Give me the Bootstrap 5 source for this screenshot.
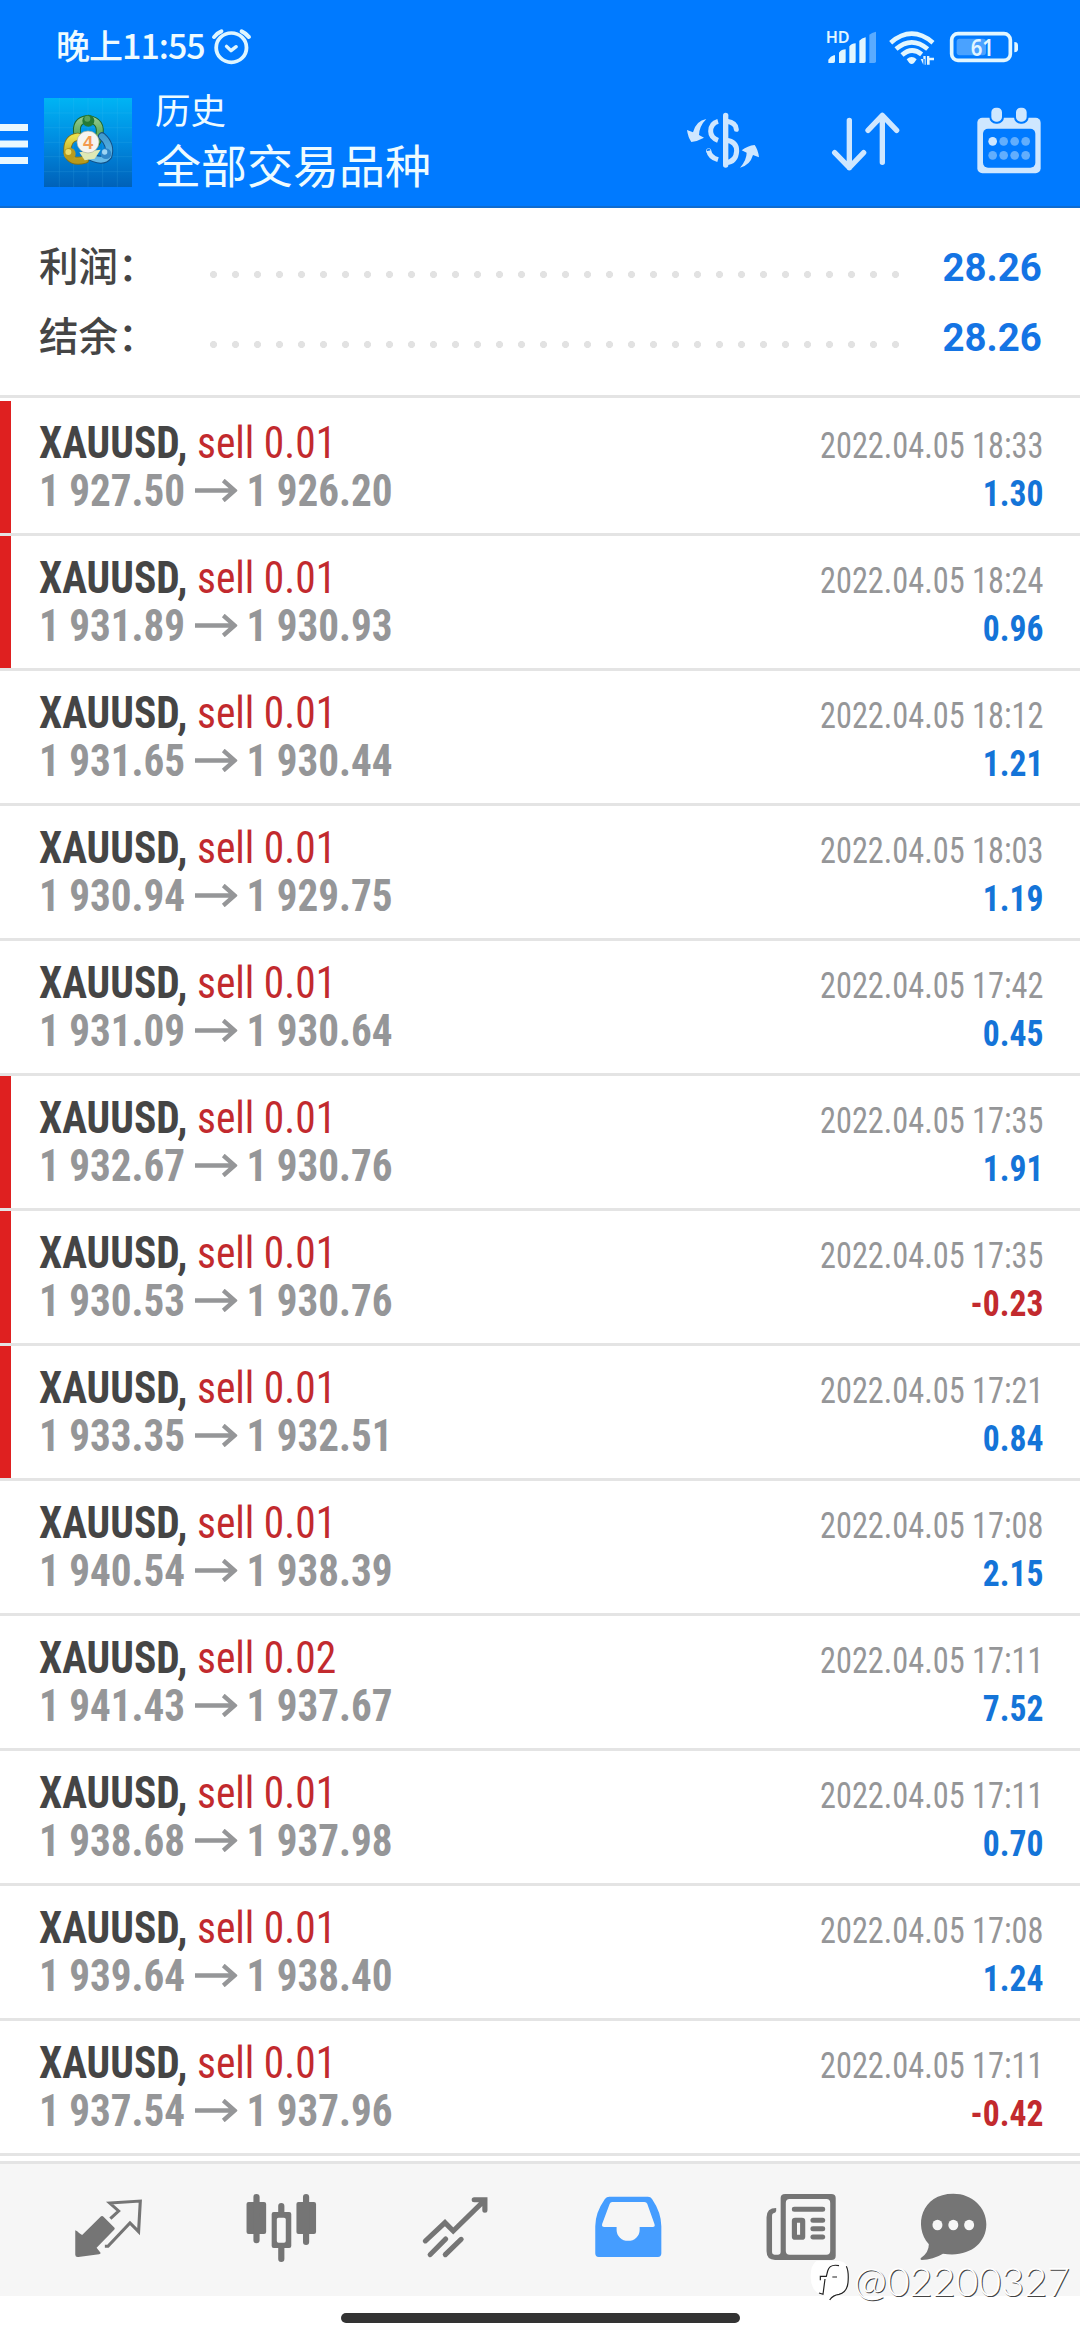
<!DOCTYPE html>
<html lang="zh-CN">
<head>
<meta charset="utf-8">
<meta name="viewport" content="width=device-width, initial-scale=1">
<title>历史</title>
<link href="https://cdn.jsdelivr.net/npm/bootstrap@5.3.0/dist/css/bootstrap.min.css" rel="stylesheet">
<style>
body{width:1080px;height:2340px;overflow:hidden;background:#fff;font-family:Roboto,"Noto Sans CJK SC",sans-serif;color:#454545}
svg{display:block;flex:none}
.topzone{height:208px;background:#007aff;color:#eefbff;border-bottom:2px solid #0f6cd0}
.statusline{height:96px;padding:20px 59px 0 56px}
.clock{font:500 34px/50px "Noto Sans CJK SC",sans-serif;letter-spacing:-1px;white-space:nowrap}
.alarm{margin:7px 0 0 5px}
.appline{height:110px}
.burger{margin-top:28px}
.logo{margin:2px 0 0 16px}
.titles{margin:-7px 0 0 23px}
.ttl1{font:400 35.5px/40px "Noto Sans CJK SC",sans-serif}
.ttl2{font:400 46px/56px "Noto Sans CJK SC",sans-serif;margin-top:6px}
.ic-cur{margin:4px 53px 0 auto}
.ic-sort{margin:14px 71px 0 0}
.ic-cal{margin:9px 36px 0 0}
.summary{height:190px;padding:24px 38px 0 40px;border-bottom:3px solid #e4e4e4}
.sumline{height:70px}
.sumline .lbl{width:171px;margin-left:-1px;font:500 39.5px/66px "Noto Sans CJK SC",sans-serif;margin-bottom:6px}
.dotrow{width:690px;height:7px;margin-top:15px;background:radial-gradient(circle at 3.5px 3.5px,#e2e2e2 3.3px,transparent 3.8px) 0 0/22px 7px}
.sumline .amt{font:700 39px/70px Roboto,sans-serif;color:#1474e4;margin-top:2px;transform:scaleX(.985);transform-origin:right}
.deals{padding-top:3px}
.deal{height:135px;border-bottom:3px solid #e4e4e4;padding:19px 37px 0 39px}
.deal.sl{box-shadow:inset 11px 0 #df2020}
.cnd{font-family:"Roboto Condensed",Roboto,sans-serif;font-stretch:75%;white-space:nowrap}
.pair,.prices{font-size:43.5px;line-height:48px;transform-origin:left}
.pair{font-weight:700;transform:scaleX(.953)}
.pair span{font-weight:400;color:#c22a2e}
.prices{font-weight:700;color:#959698;transform:scaleX(.945)}
.prices svg{margin:0 10px 3px 10px}
.when{font-size:36.5px;line-height:48px;color:#959698;margin-top:2px;transform:scaleX(.885);transform-origin:right}
.gain{font-size:36.5px;line-height:48px;font-weight:700;color:#1474d8;transform:scaleX(.92);transform-origin:right}
.gain.loss{color:#c22a2e}
.tabs{margin-top:5px;height:135px;border-top:3px solid #e4e4e4;background:#f6f6f6;padding:26px 0 0 22px}
.tabs a{width:173.2px;display:flex;justify-content:center}
.tabs a:last-child{width:130px}
.homebar{width:399px;height:10px;border-radius:5px;background:#333;margin:17px auto 0}
.wmark{right:10px;bottom:36px;height:46px;color:#fff;font:300 39.5px/46px Lato,sans-serif;text-shadow:1px 1px 0 #444;white-space:nowrap}
</style>
</head>
<body class="position-relative">
<header class="topzone">
 <div class="statusline d-flex align-items-start">
  <span class="clock">晚上11:55</span>
  <svg class="alarm" width="43.4" height="40" viewBox="610 80 126 120" preserveAspectRatio="none" fill="none" stroke="#dff6ff" stroke-linecap="round" stroke-linejoin="round"><circle cx="672" cy="142" r="44" stroke-width="11"/><path d="M658 138L671 151L686 139" stroke-width="10"/><path d="M622 110Q630 98 643 93M702 93Q715 99 723 110" stroke-width="12"/></svg>
  <svg class="ms-auto" width="200" height="55" viewBox="0 0 600 165" fill="#e2f6ff">
   <text x="14" y="68" font-family="Noto Sans" font-weight="600" font-size="46" textLength="72" lengthAdjust="spacingAndGlyphs">HD</text>
   <path d="M22 129V119Q28 108 40 105Q42 105 42 109V124Q42 129 37 129ZM54 129V98Q62 88 74 88V124Q74 129 69 129ZM85 129V79Q92 70 104 70V124Q104 129 99 129ZM115 129V62Q122 54 134 52V124Q134 129 129 129Z"/>
   <path d="M145 129V44Q152 38 165 35V124Q165 129 160 129Z" opacity=".4"/>
   <g fill="none" stroke="#e2f6ff" stroke-width="14"><path d="M209 68Q272 14 336 68"/><path d="M225 87Q272 47 320 87"/><path d="M243 105Q272 79 302 103"/></g>
   <path d="M257 118Q272 104 287 118L279 129Q272 135 265 129ZM307 108V134H314V108ZM318 134V108H325V113H339V121H326V134ZM299 117H311V134H307Z"/>
   <rect x="392" y="41" width="176" height="80" rx="19" fill="none" stroke="#e2f6ff" stroke-width="11"/>
   <rect x="407" y="56" width="88" height="50" rx="9" opacity=".33"/>
   <path d="M580 66Q591 66 591 75V88Q591 97 580 97Z"/>
   <text x="449" y="108" font-family="Noto Sans" font-weight="600" font-size="71" textLength="70" lengthAdjust="spacingAndGlyphs">61</text>
  </svg>
 </div>
 <div class="appline d-flex align-items-start">
  <svg class="burger" width="28" height="41" viewBox="0 0 28 41" fill="#e9f8ff"><path d="M0 0H28V7H0ZM0 16.500H28V23.500H0ZM0 33H28V40H0Z"/></svg>
  <svg class="logo" width="88" height="89" viewBox="42 23 264 267">
   <defs>
    <linearGradient id="sky" x1="0" y1="0" x2="0" y2="1"><stop offset="0" stop-color="#00b4f4"/><stop offset=".5" stop-color="#008ae0"/><stop offset="1" stop-color="#0061b8"/></linearGradient>
    <linearGradient id="gr" x1="0" y1="0" x2="0" y2="1"><stop offset="0" stop-color="#8fc88a"/><stop offset="1" stop-color="#32913c"/></linearGradient>
    <linearGradient id="ye" x1="0" y1="0" x2="0" y2="1"><stop offset="0" stop-color="#e9e04e"/><stop offset="1" stop-color="#b89a1c"/></linearGradient>
    <linearGradient id="bl" x1="0" y1="0" x2="0" y2="1"><stop offset="0" stop-color="#3f9bd0"/><stop offset="1" stop-color="#68bbe8"/></linearGradient>
   </defs>
   <rect x="42" y="23" width="264" height="267" fill="url(#sky)"/>
   <path d="M88 23V290M131 23V290M174 23V290M218 23V290M262 23V290M42 68H306M42 112H306M42 156H306M42 199H306M42 244H306" stroke="#5cc8f0" stroke-width="1.500" opacity=".28"/>
   <g fill="none" stroke-linecap="round">
    <path d="M143 135Q132 90 174 86Q219 92 207 138Q205 152 190 168" stroke="#1d672d" stroke-width="24"/><path d="M143 135Q132 90 174 86Q219 92 207 138Q205 152 190 168" stroke="url(#gr)" stroke-width="18"/>
    <path d="M143 139Q110 143 112 186Q120 220 165 208" stroke="#816f15" stroke-width="24"/><path d="M143 139Q110 143 112 186Q120 220 165 208" stroke="url(#ye)" stroke-width="19"/>
    <path d="M216 138Q245 164 235 197Q216 222 165 190" stroke="#124f86" stroke-width="24"/><path d="M216 138Q245 164 235 197Q216 222 165 190" stroke="url(#bl)" stroke-width="18"/>
   </g>
   <path d="M148 186L164 210L194 205L212 178Z" fill="#dfe9b6"/>
   <circle cx="175" cy="91" r="18" fill="#257a35"/><circle cx="172" cy="85" r="9" fill="#58a35e"/>
   <circle cx="119" cy="190" r="18" fill="#b89b1e"/><circle cx="115" cy="185" r="9" fill="#eadb68"/>
   <circle cx="228" cy="190" r="16" fill="#3187c9"/><circle cx="224" cy="185" r="8" fill="#9ed5f4"/>
   <circle cx="174" cy="155" r="33" fill="#f5f4f1" stroke="#a8ae93" stroke-width="2"/>
   <text x="174" y="175" text-anchor="middle" font-family="Liberation Sans" font-weight="700" font-size="55" fill="#f39a50">4</text>
  </svg>
  <div class="titles"><div class="ttl1">历史</div><div class="ttl2">全部交易品种</div></div>
  <svg class="ic-cur" width="100" height="80" viewBox="0 0 300 240" fill="#cfe7ff"><path d="M91 57Q60 62 51 97L33 90Q36 112 46 126Q64 124 84 113L69 105Q70 78 91 57ZM192 203Q212 180 212 158L197 151Q215 137 236 135Q246 148 249 172L231 165Q222 196 192 203Z"/><g fill="none" stroke="#cfe7ff" stroke-width="15"><path d="M149 46V195" stroke-width="16" stroke-linecap="round"/><path d="M152 64Q180 68 181 88" stroke-linecap="round"/><path d="M150 121Q182 124 182 153Q180 186 150 188"/><path d="M126 64Q104 70 104 94Q104 113 126 121"/><path d="M98 152Q102 172 126 179"/><circle cx="98" cy="152" r="1" stroke-width="13"/></g></svg>
  <svg class="ic-sort" width="74" height="64" viewBox="505 330 222 192" fill="none" stroke="#cfe7ff" stroke-width="16" stroke-linecap="round" stroke-linejoin="round"><path d="M566 361V503M522 458L566 503L609 458M665 487V346M622 391L665 346L708 391"/></svg>
  <svg class="ic-cal" width="70" height="70" viewBox="940 315 210 210" fill="#cfe7ff"><rect x="950" y="353" width="190" height="167" rx="15"/><rect x="967" y="386" width="157" height="117" rx="15" fill="#007aff"/><g stroke="#007aff" stroke-width="6"><rect x="989" y="320" width="38" height="48" rx="17"/><rect x="1063" y="320" width="38" height="48" rx="17"/></g><circle cx="996" cy="424" r="13"/><g fill="#62aefd"><circle cx="1029" cy="424" r="13"/><circle cx="1062" cy="424" r="13"/><circle cx="1095" cy="424" r="13"/><circle cx="996" cy="466" r="13"/><circle cx="1029" cy="466" r="13"/><circle cx="1062" cy="466" r="13"/><circle cx="1095" cy="466" r="13"/></g></svg>
 </div>
</header>
<section class="summary">
 <div class="sumline d-flex align-items-center"><span class="lbl">利润：</span><span class="dotrow"></span><span class="amt ms-auto">28.26</span></div>
 <div class="sumline d-flex align-items-center"><span class="lbl">结余：</span><span class="dotrow"></span><span class="amt ms-auto">28.26</span></div>
</section>
<main class="deals" id="deals"></main>
<nav class="tabs d-flex align-items-start">
 <a><svg width="82.600" height="73.300" viewBox="195 180 240 220" preserveAspectRatio="none" fill="#757575"><path d="M219 301Q225 303 230 309L239 315L294 259Q298 257 301 260L333 293Q335 296 332 299L281 353L293 369Q292 372 288 373L228 381Q219 382 219 374Z"/><path d="M321 266L345 243L319 219L408 213L403 305L378 279L314 349H305" fill="none" stroke="#757575" stroke-width="9"/></svg></a>
 <a><svg width="82.600" height="73.300" viewBox="696 180 240 220" preserveAspectRatio="none" fill="#757575"><rect x="715" y="216" width="57" height="96" rx="6"/><rect x="860" y="216" width="57" height="96" rx="6"/><path d="M744 201V331M888 201V336M816 228V250M816 350V387" stroke="#757575" stroke-width="18" stroke-linecap="round"/><path fill-rule="evenodd" d="M794 246H839Q845 246 845 252V348Q845 354 839 354H794Q788 354 788 348V252Q788 246 794 246ZM808 263Q803 263 803 268V333Q803 338 808 338H824Q829 338 829 333V268Q829 263 824 263Z"/></svg></a>
 <a><svg width="82.600" height="73.300" viewBox="1199 180 240 220" preserveAspectRatio="none" fill="none" stroke="#757575" stroke-width="15" stroke-linecap="round"><path d="M1232 333L1289 278L1313 303L1405 210M1374 209H1405V241M1246 374L1291 327M1290 374L1336 328"/></svg></a>
 <a><svg width="82.600" height="73.300" viewBox="134 180 240 220" preserveAspectRatio="none"><path fill="#459dff" fill-rule="evenodd" d="M199 200H311Q319 200 323 207Q350 248 350 289V370Q350 381 340 381H168Q158 381 158 370V289Q158 248 186 207Q191 200 199 200ZM207 216Q202 216 200 221L178 282Q176 291 184 291H220V300A33 32 0 0 0 287 300V291H325Q333 291 330 282L309 221Q307 216 301 216Z"/></svg></a>
 <a><svg width="82.600" height="73.300" viewBox="638 180 240 220" preserveAspectRatio="none" fill="#757575"><path fill-rule="evenodd" d="M711 192H845Q858 192 858 204V377Q858 390 845 390H682Q657 390 657 364V262Q657 234 685 234V243Q684 249 677 250Q673 251 673 257V367Q673 374 680 374H691Q698 374 698 367V204Q698 192 711 192ZM724 207Q713 207 713 219V363Q713 374 724 374H831Q842 374 842 363V219Q842 207 831 207Z"/><path d="M738 238H820M792 271H820M792 296H820M792 321H820" stroke="#757575" stroke-width="15" stroke-linecap="round"/><rect x="738" y="271" width="24" height="51" rx="2" fill="none" stroke="#757575" stroke-width="15" stroke-linejoin="round"/></svg></a>
 <a><svg width="82.600" height="73.300" viewBox="1079 180 240 220" preserveAspectRatio="none"><path fill="#757575" d="M1199 191C1254 191 1295 232 1295 283C1295 342 1243 384 1169 371Q1140 389 1107 390Q1103 390 1104 385Q1128 369 1128 343C1082 288 1106 191 1199 191Z"/><g fill="#f6f6f6"><ellipse cx="1153" cy="285" rx="14.500" ry="16"/><ellipse cx="1199" cy="285" rx="14.500" ry="16"/><ellipse cx="1245" cy="285" rx="14.500" ry="16"/></g></svg></a>
</nav>
<div class="homebar"></div>
<div class="wmark position-absolute d-flex align-items-center">
 <svg width="45" height="44" viewBox="28 24 135 132"><path fill="#fff" d="M50 30H120Q148 34 148 70Q148 122 118 132Q100 134 92 150Q88 134 62 130Q34 118 33 80Q32 42 50 30Z"/><path fill="none" stroke="#222" stroke-width="3.500" d="M140 46Q148 62 145 95Q142 124 118 130Q100 132 90 147M118 44Q90 38 84 60L80 76H62V88M76 84L70 130L58 126M98 78H112"/></svg>
 <span>@02200327</span>
</div>
<script>
const deals=[
 ["sell 0.01","1 927.50","1 926.20","18:33","1.30",1],
 ["sell 0.01","1 931.89","1 930.93","18:24","0.96",1],
 ["sell 0.01","1 931.65","1 930.44","18:12","1.21",0],
 ["sell 0.01","1 930.94","1 929.75","18:03","1.19",0],
 ["sell 0.01","1 931.09","1 930.64","17:42","0.45",0],
 ["sell 0.01","1 932.67","1 930.76","17:35","1.91",1],
 ["sell 0.01","1 930.53","1 930.76","17:35","-0.23",1],
 ["sell 0.01","1 933.35","1 932.51","17:21","0.84",1],
 ["sell 0.01","1 940.54","1 938.39","17:08","2.15",0],
 ["sell 0.02","1 941.43","1 937.67","17:11","7.52",0],
 ["sell 0.01","1 938.68","1 937.98","17:11","0.70",0],
 ["sell 0.01","1 939.64","1 938.40","17:08","1.24",0],
 ["sell 0.01","1 937.54","1 937.96","17:11","-0.42",0]
];
document.getElementById("deals").innerHTML=deals.map(([op,from,to,time,res,sl])=>`
<div class="deal d-flex justify-content-between align-items-start${sl?" sl":""}">
 <div>
  <div class="cnd pair">XAUUSD, <span>${op}</span></div>
  <div class="cnd prices d-flex align-items-center"><span>${from}</span><svg width="45" height="23" viewBox="0 0 45 23" fill="none" stroke="#959698" stroke-width="4.500"><path d="M0 11.500H41M30 1.500L42 11.500L30 21.500"/></svg><span>${to}</span></div>
 </div>
 <div class="text-end">
  <div class="cnd when">2022.04.05 ${time}</div>
  <div class="cnd gain${res[0]==="-"?" loss":""}">${res}</div>
 </div>
</div>`).join("");
</script>
<script src="https://cdn.jsdelivr.net/npm/bootstrap@5.3.0/dist/js/bootstrap.bundle.min.js"></script>
</body>
</html>
